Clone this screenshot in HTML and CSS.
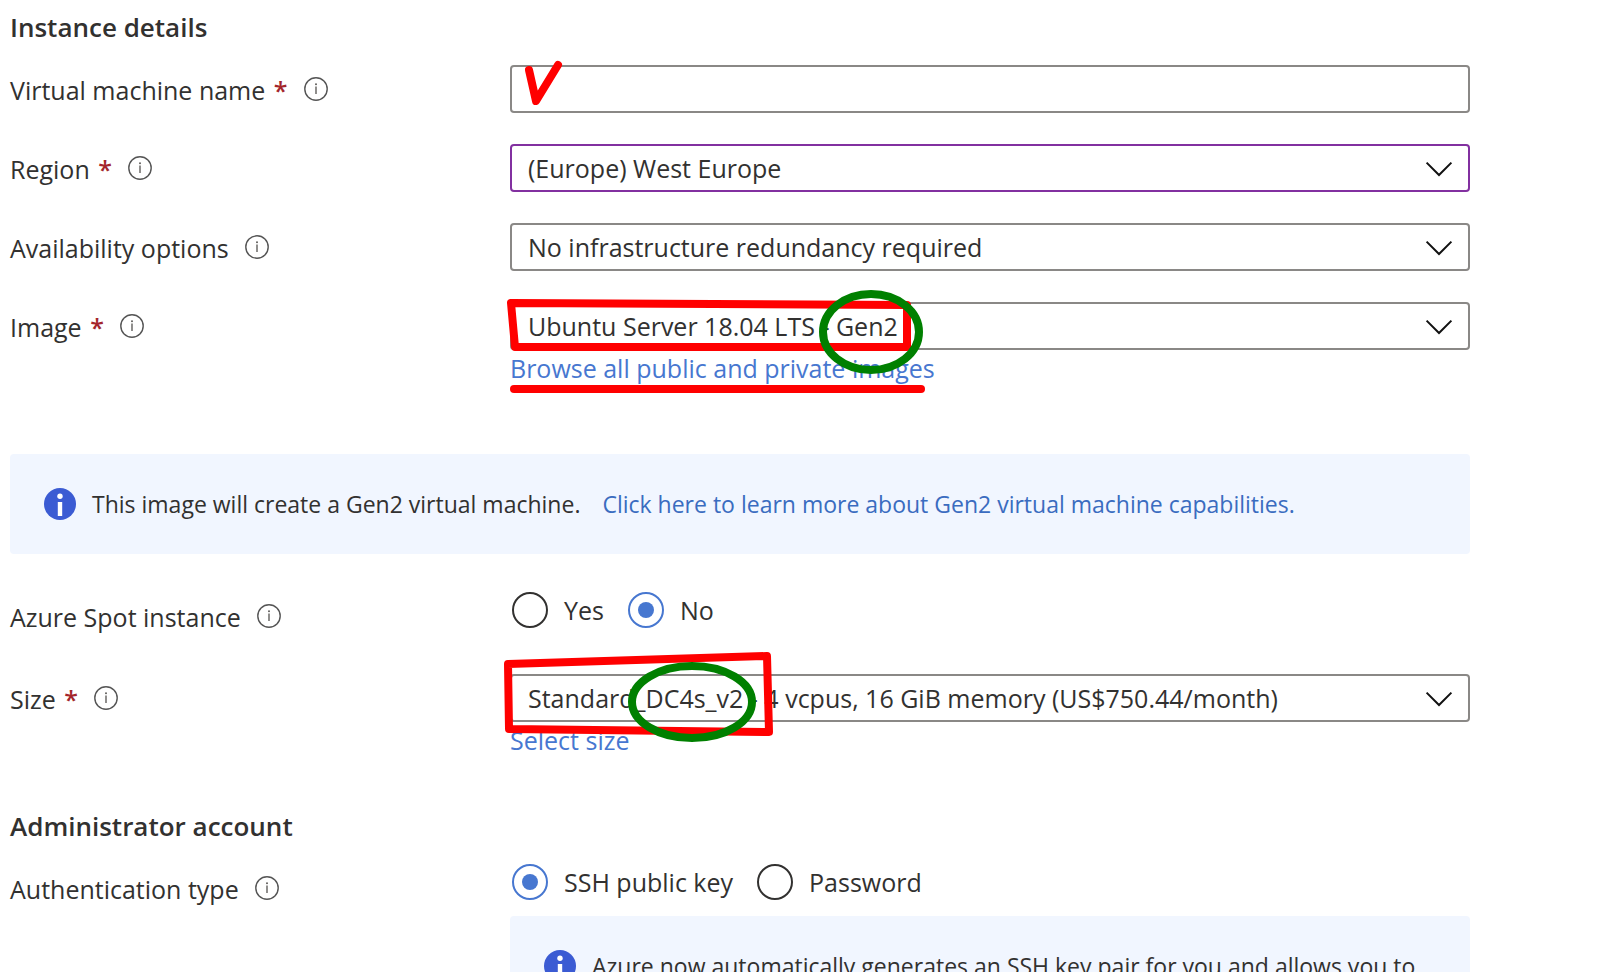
FILE: index.html
```html
<!DOCTYPE html>
<html lang="en">
<head>
<meta charset="utf-8">
<meta name="viewport" content="width=device-width, initial-scale=1">
<title>Create a virtual machine</title>
<link rel="stylesheet" href="styles.css">
</head>
<body>
<svg class="sprite" aria-hidden="true">
  <symbol id="info" viewBox="0 0 24 24">
    <circle cx="12" cy="12" r="11.2" fill="none" stroke="#555" stroke-width="1.4"/>
    <path d="M12 9.6V17" fill="none" stroke="#605e5c" stroke-width="1.4"/>
    <circle cx="12" cy="7.2" r="1" fill="#605e5c"/>
  </symbol>
  <symbol id="info-solid" viewBox="0 0 32 32">
    <circle cx="16" cy="16" r="16" fill="#3b5bd3"/>
    <circle cx="16" cy="8.2" r="2.7" fill="#fff"/>
    <path d="M13.8 14h4.4v14h-4.4z" fill="#fff"/>
  </symbol>
  <symbol id="chevron" viewBox="0 0 28 16">
    <path d="M1.6 1.6L14 14L26.4 1.6" fill="none" stroke="#111" stroke-width="2"/>
  </symbol>
</svg>
<main class="blade">
  <form class="form">
    <h2 class="heading">Instance details</h2>
    <div class="fields">
      <div class="row">
        <div class="label"><label class="label-text" for="vm-name">Virtual machine name <span class="required">*</span></label><svg class="info"><use href="#info"/></svg></div>
        <div class="control">
          <input class="box" id="vm-name" type="text">
          <svg class="ink" aria-hidden="true"><path class="red" d="M19 5L26 36L48 0"/></svg>
        </div>
      </div>
      <div class="row">
        <div class="label"><label class="label-text" for="region">Region <span class="required">*</span></label><svg class="info"><use href="#info"/></svg></div>
        <div class="control">
          <div class="select">
            <select class="box box-edited" id="region"><option>(Europe) West Europe</option></select>
            <svg class="chevron"><use href="#chevron"/></svg>
          </div>
        </div>
      </div>
      <div class="row">
        <div class="label"><label class="label-text" for="availability">Availability options</label><svg class="info"><use href="#info"/></svg></div>
        <div class="control">
          <div class="select">
            <select class="box" id="availability"><option>No infrastructure redundancy required</option></select>
            <svg class="chevron"><use href="#chevron"/></svg>
          </div>
        </div>
      </div>
      <div class="row">
        <div class="label"><label class="label-text" for="image">Image <span class="required">*</span></label><svg class="info"><use href="#info"/></svg></div>
        <div class="control">
          <div class="select">
            <select class="box" id="image"><option>Ubuntu Server 18.04 LTS - Gen2</option></select>
            <svg class="chevron"><use href="#chevron"/></svg>
          </div>
          <a class="link" href="#images">Browse all public and private images</a>
          <svg class="ink" aria-hidden="true">
            <path class="red" d="M1 1L397 3V45H5Z"/>
            <path class="red" d="M4 87H411"/>
            <ellipse class="green" cx="361" cy="30" rx="48" ry="38"/>
          </svg>
        </div>
      </div>
    </div>

    <div class="banner banner-wide">
      <svg class="banner-icon"><use href="#info-solid"/></svg>
      <p class="banner-text">This image will create a Gen2 virtual machine. <a class="banner-link" href="#gen2">Click here to learn more about Gen2 virtual machine capabilities.</a></p>
    </div>

    <div class="fields fields-size">
      <div class="row">
        <div class="label"><span class="label-text" id="spot-label">Azure Spot instance</span><svg class="info"><use href="#info"/></svg></div>
        <div class="control">
          <div class="radios" role="radiogroup" aria-labelledby="spot-label">
            <label class="radio"><input type="radio" name="spot">Yes</label>
            <label class="radio"><input type="radio" name="spot" checked>No</label>
          </div>
        </div>
      </div>
      <div class="row">
        <div class="label"><label class="label-text" for="size">Size <span class="required">*</span></label><svg class="info"><use href="#info"/></svg></div>
        <div class="control">
          <div class="select">
            <select class="box" id="size"><option>Standard_DC4s_v2 - 4 vcpus, 16 GiB memory (US$750.44/month)</option></select>
            <svg class="chevron"><use href="#chevron"/></svg>
          </div>
          <a class="link" href="#sizes">Select size</a>
          <svg class="ink" aria-hidden="true">
            <path class="red" d="M-1 55L-2 -10L257 -18L259 58L0 55"/>
            <ellipse class="green" cx="182" cy="28" rx="60" ry="36"/>
          </svg>
        </div>
      </div>
    </div>

    <h2 class="heading">Administrator account</h2>
    <div class="fields">
      <div class="row">
        <div class="label"><span class="label-text" id="auth-label">Authentication type</span><svg class="info"><use href="#info"/></svg></div>
        <div class="control">
          <div class="radios" role="radiogroup" aria-labelledby="auth-label">
            <label class="radio"><input type="radio" name="auth" checked>SSH public key</label>
            <label class="radio"><input type="radio" name="auth">Password</label>
          </div>
          <div class="banner banner-nested">
            <svg class="banner-icon"><use href="#info-solid"/></svg>
            <p class="banner-text">Azure now automatically generates an SSH key pair for you and allows you to</p>
          </div>
        </div>
      </div>
    </div>
  </form>
</main>
</body>
</html>
```

FILE: styles.css
```css
* { box-sizing: border-box; }

body {
  margin: 0;
  background: #fff;
  color: #323130;
  font: 25px/36px "Open Sans", "Noto Sans", sans-serif;
}

.sprite { position: absolute; width: 0; height: 0; }

.blade { height: 100vh; overflow: hidden; }

.form { padding: 9px 149px 0 10px; }

.heading {
  margin: 0 0 20px;
  font-size: 26px;
  font-weight: 600;
  line-height: 36px;
}

.fields { display: grid; gap: 31px; }
.fields-size { gap: 34px; margin-bottom: 50px; }

.row {
  display: grid;
  grid-template-columns: 500px minmax(0, 1fr);
  align-items: start;
}

.label {
  display: flex;
  align-items: center;
  gap: 16px;
  height: 48px;
}
.label-text { padding-top: 2px; }
.required { margin-left: 2px; color: #a4262c; font-weight: 600; }
.info { width: 24px; height: 24px; }

.control { position: relative; }

.box {
  appearance: none;
  display: block;
  width: 100%;
  height: 48px;
  margin: 0;
  padding: 0 64px 0 16px;
  border: 2px solid #8a8886;
  border-radius: 4px;
  background: #fff;
  color: inherit;
  font: inherit;
  line-height: 36px;
}
.box-edited { border-color: #8230a0; }

.select { position: relative; }
.chevron {
  position: absolute;
  top: 17px;
  right: 17px;
  width: 28px;
  height: 16px;
  pointer-events: none;
}

.link { display: block; color: #4777d0; text-decoration: none; }

.ink {
  position: absolute;
  top: 0;
  left: 0;
  width: 100%;
  height: 100%;
  overflow: visible;
  pointer-events: none;
}
.red, .green {
  fill: none;
  stroke-width: 8px;
  stroke-linecap: round;
  stroke-linejoin: round;
}
.red { stroke: #f00; }
.green { stroke: #008000; }

.banner {
  display: flex;
  gap: 16px;
  padding: 34px;
  border-radius: 4px;
  background: #f1f6ff;
  font-size: 23px;
  line-height: 32px;
}
.banner-wide { margin: 68px 0 38px; }
.banner-nested { margin-top: 16px; }
.banner-icon { flex: none; width: 32px; height: 32px; }
.banner-text { margin: 0; }
.banner-link { margin-left: 16px; color: #3a6cc0; text-decoration: none; }

.radios { display: flex; gap: 24px; padding-left: 2px; }
.radio { display: flex; align-items: center; gap: 16px; }
.radio input {
  appearance: none;
  display: grid;
  place-items: center;
  width: 36px;
  height: 36px;
  margin: 0;
  border: 2px solid #323130;
  border-radius: 50%;
}
.radio input:checked { border-color: #4777d0; }
.radio input:checked::before {
  content: "";
  width: 16px;
  height: 16px;
  border-radius: 50%;
  background: #4777d0;
}
```
